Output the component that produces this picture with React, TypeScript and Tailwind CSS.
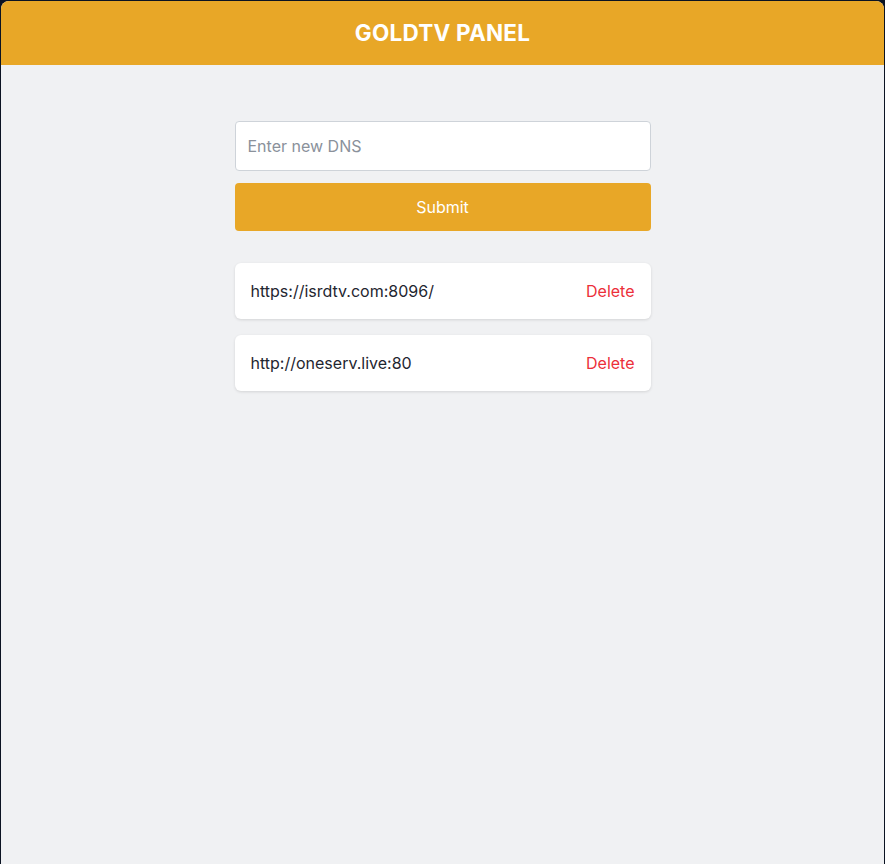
import React from "react";

export default function App() {
  const items = ["https://isrdtv.com:8096/", "http://oneserv.live:80"];
  return (
    <div className="min-h-[864px] bg-[#0b1322] px-px pt-px" style={{ fontFamily: "Inter, 'Noto Sans', sans-serif" }}>
      <div className="min-h-[863px] rounded-t-lg overflow-hidden bg-[#f0f1f3] flex flex-col">
        <header className="h-16 bg-[#e8a727] flex items-center justify-center">
          <h1 className="text-white text-[22.5px] font-bold tracking-[0.01em]">GOLDTV PANEL</h1>
        </header>
        <main className="flex justify-center pt-14">
          <div className="w-[416px] flex flex-col">
            <input
              className="h-[50px] w-full rounded border border-[#ced3d9] bg-white px-3 text-base text-[#1f2937] placeholder:text-[#8a919b] outline-none"
              placeholder="Enter new DNS"
            />
            <button className="mt-3 h-12 w-full rounded bg-[#e8a727] text-white text-base">Submit</button>
            <div className="mt-8 flex flex-col gap-4">
              {items.map((it) => (
                <div key={it} className="h-14 rounded-md bg-white shadow-[0_1px_3px_rgba(0,0,0,0.12)] flex items-center justify-between px-4">
                  <span className="text-base text-[#1f2630]">{it}</span>
                  <button className="text-base text-[#ec2f3a]">Delete</button>
                </div>
              ))}
            </div>
          </div>
        </main>
      </div>
    </div>
  );
}
